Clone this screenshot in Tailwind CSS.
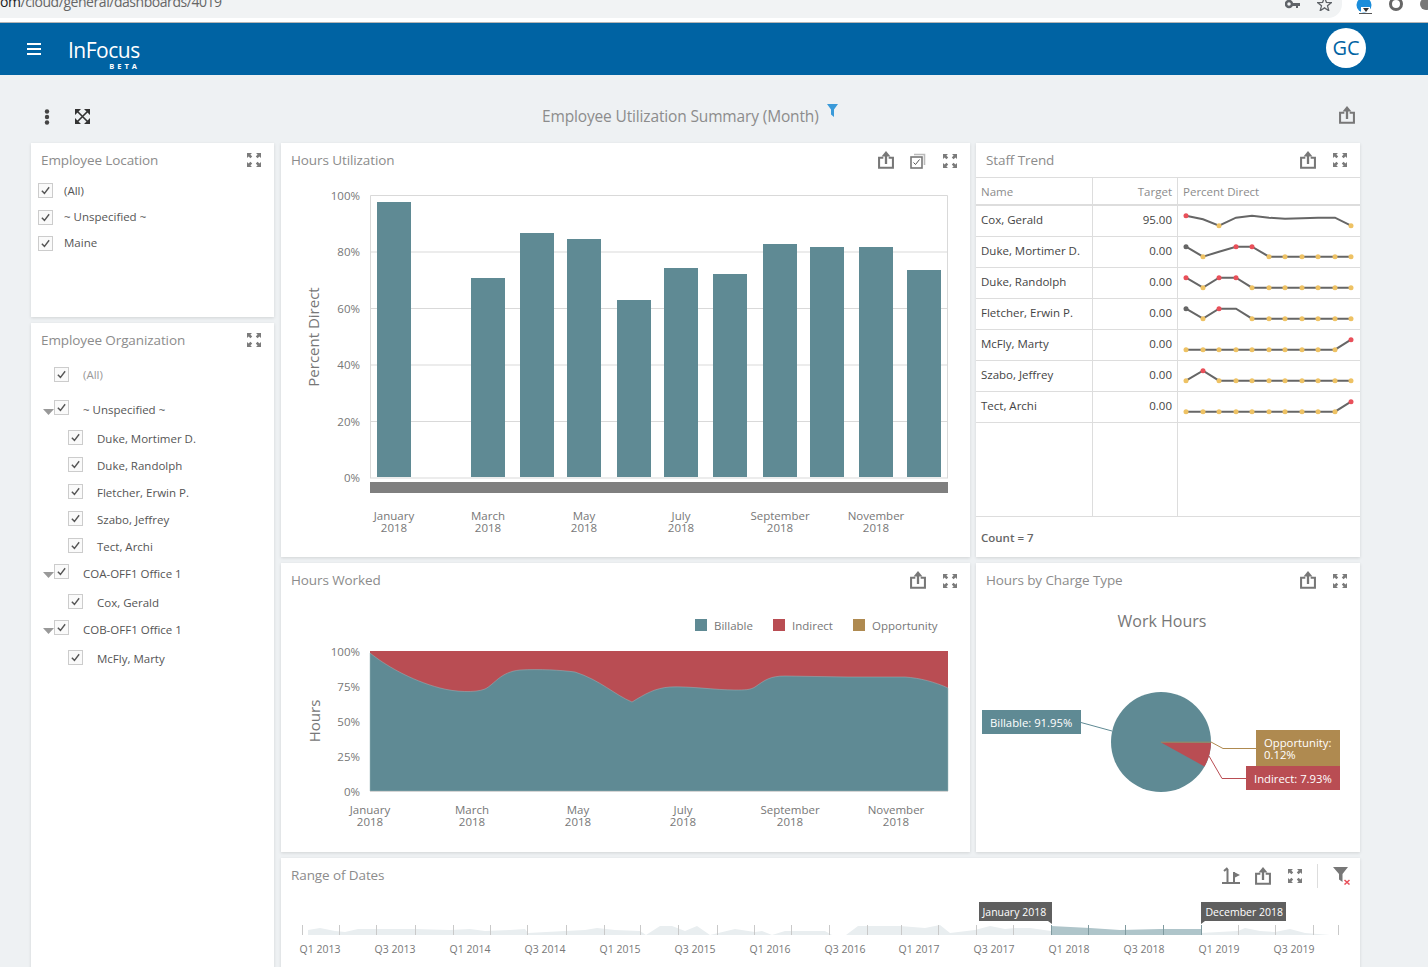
<!DOCTYPE html>
<html><head><meta charset="utf-8">
<script src="https://cdn.jsdelivr.net/npm/@tailwindcss/browser@4"></script>
</head>
<body class="m-0 w-[1428px] h-[967px] overflow-hidden bg-[#eef1f3] font-['Open_Sans','Noto_Sans',sans-serif] text-[12px] text-[#555]">
<svg class="hidden" width="0" height="0">
  <symbol id="ex" viewBox="0 0 16 16"><g fill="#7b7b7b"><path d="M1 1h5L4.4 2.6 6.2 4.4 4.4 6.2 2.6 4.4 1 6zM15 1v5l-1.6-1.6-1.8 1.8-1.8-1.8 1.8-1.8L10 1zM1 15v-5l1.6 1.6 1.8-1.8 1.8 1.8-1.8 1.8L6 15zM15 15h-5l1.6-1.6-1.8-1.8 1.8-1.8 1.8 1.8L15 10z"/></g></symbol>
  <symbol id="sh" viewBox="0 0 18 20"><path d="M6 7.500H1.200v11.300h15.600V7.500H12" fill="none" stroke="#777" stroke-width="2.300"/><path d="M9 14.500V3" stroke="#777" stroke-width="2.600"/><path d="M4 6 9 0l5 6z" fill="#777"/></symbol>
  <symbol id="ck" viewBox="0 0 16 16"><path d="M3.500 8.200 6.700 11.500 12.500 4" fill="none" stroke="#555" stroke-width="1.700"/></symbol>
</svg>

<!-- browser chrome strip -->
<div class="h-[23px] bg-white border-b border-[#b5b5b5] flex overflow-hidden">
  <div class="h-[18px] w-[1342px] shrink-0 bg-[#f1f3f4] rounded-br-[14px] flex justify-between pr-[10px]">
    <div class="text-[14px] leading-[18px] -mt-[7px] tracking-[-0.45px] text-[#666] whitespace-nowrap"><span class="text-[#222]">om</span>/cloud/general/dashboards/4019</div>
    <div class="flex items-start gap-[17px] -mt-[2px] pt-[2px]">
      <svg width="15" height="10" viewBox="0 0 15 10"><circle cx="4" cy="4" r="3" fill="none" stroke="#5f6368" stroke-width="2.500"/><path d="M7 3h8v3h-2v2h-2V6H7z" fill="#5f6368"/></svg>
      <svg width="15" height="14" viewBox="0 0 15 14" class="-mt-[3px]"><path d="M7.500 .5 9.400 5.300l5 .3-3.900 3.200 1.300 4.900-4.300-2.800-4.300 2.800 1.300-4.900L.6 5.600l5-.3z" fill="none" stroke="#5f6368" stroke-width="1.300"/></svg>
    </div>
  </div>
  <div class="flex items-start gap-[16px] pl-[14px] -mt-[3px]">
    <svg width="17" height="18" viewBox="0 0 17 18" class="shrink-0"><circle cx="8" cy="8" r="7.500" fill="#1a8ddb"/><path d="M5 10h9v5H5z" fill="#fff"/><path d="M7 11h6l-3 4z" fill="#333"/><path d="M3 16.500h13" stroke="#555"/></svg>
    <svg width="14" height="16" viewBox="0 0 14 16" class="shrink-0"><circle cx="7" cy="7" r="5.500" fill="none" stroke="#666" stroke-width="3"/></svg>
    <svg width="14" height="16" viewBox="0 0 14 16" class="shrink-0"><circle cx="7" cy="7" r="6" fill="#777"/></svg>
  </div>
</div>

<!-- app header -->
<header class="h-[52px] bg-[#0063a3] flex items-center justify-between pl-[27px] pr-[62px]">
  <div class="flex items-center">
    <svg width="14" height="12" viewBox="0 0 14 12" class="-mt-[1px]"><path d="M0 1h14M0 6h14M0 11h14" stroke="#fff" stroke-width="2"/></svg>
    <div class="ml-[27px] w-[72px] mt-[10px]">
      <div class="text-[21px] leading-[22px] text-white tracking-[-0.5px] whitespace-nowrap">InFocus</div>
      <div class="text-[7.500px] leading-[8px] mt-[1px] font-bold text-white tracking-[3px] text-right">BETA</div>
    </div>
  </div>
  <div class="w-[40px] h-[40px] rounded-full bg-white text-[#0063a3] text-[20px] flex items-center justify-center -mt-[2px]">GC</div>
</header>

<!-- dashboard toolbar -->
<div class="h-[68px] flex items-start pl-[44px] pr-[73px] pt-[32px] justify-between relative">
  <div class="flex items-center gap-[25px]">
    <svg width="6" height="16" viewBox="0 0 6 16" class="mt-[2px]"><circle cx="3" cy="2.500" r="2.200" fill="#444"/><circle cx="3" cy="8" r="2.200" fill="#444"/><circle cx="3" cy="13.500" r="2.200" fill="#444"/></svg>
    <svg width="15" height="15" viewBox="0 0 15 15"><path d="M2 2l11 11M13 2 2 13" stroke="#333" stroke-width="1.600"/><path d="M0 0h6L0 6zM15 0v6l-6-6zM0 15V9l6 6zM15 15H9l6-6z" fill="#333"/></svg>
  </div>
  <div class="absolute left-[542px] top-[30px] flex items-start">
    <div class="text-[15.500px] leading-[22px] text-[#8c8c8c] tracking-[-0.15px] whitespace-nowrap">Employee Utilization Summary (Month)</div>
    <svg width="11" height="13" viewBox="0 0 11 13" class="ml-[8px] mt-[-1px]"><path d="M0 0h11L7 5.500V13L4 10.500V5.500z" fill="#3a9ad9"/></svg>
  </div>
  <svg width="16" height="18" class="mt-[-1px]"><use href="#sh"/></svg>
</div>

<!-- panels -->
<main class="flex pl-[31px]">
  <!-- left column -->
  <div class="w-[243px] mr-[7px] flex flex-col gap-[6px]">
    <section class="h-[174px] bg-white shadow-[0_1px_3px_rgba(0,0,0,.12)]">
      <div class="h-[34px] flex items-center justify-between pl-[10px] pr-[12px]">
        <h2 class="text-[13.500px] font-normal text-[#8c8c8c] tracking-[-0.1px]">Employee Location</h2>
        <svg width="16" height="16"><use href="#ex"/></svg>
      </div>
      <div class="pl-[7px] flex flex-col text-[11.500px]">
        <label class="h-[27px] flex items-center"><span class="w-[15px] h-[15px] border border-[#ccc] bg-[#fafafa] mr-[11px] flex"><svg width="13" height="13"><use href="#ck"/></svg></span>(All)</label>
        <label class="h-[26px] flex items-center"><span class="w-[15px] h-[15px] border border-[#ccc] bg-[#fafafa] mr-[11px] flex"><svg width="13" height="13"><use href="#ck"/></svg></span>~ Unspecified ~</label>
        <label class="h-[26px] flex items-center"><span class="w-[15px] h-[15px] border border-[#ccc] bg-[#fafafa] mr-[11px] flex"><svg width="13" height="13"><use href="#ck"/></svg></span>Maine</label>
      </div>
    </section>
    <section class="h-[650px] bg-white shadow-[0_1px_3px_rgba(0,0,0,.12)]">
      <div class="h-[34px] flex items-center justify-between pl-[10px] pr-[12px]">
        <h2 class="text-[13.500px] font-normal text-[#8c8c8c] tracking-[-0.1px]">Employee Organization</h2>
        <svg width="16" height="16"><use href="#ex"/></svg>
      </div>
      <div class="pt-[4px] flex flex-col text-[11.500px]">
        <div class="h-[27px] flex items-center pl-[23px] text-[#999]"><span class="w-[15px] h-[15px] border border-[#ccc] bg-[#fafafa] mr-[14px] flex"><svg width="13" height="13"><use href="#ck"/></svg></span>(All)</div>
        <div class="h-[36px] mt-[4px] flex items-center pl-[12px]"><svg width="11" height="6" class="mt-[3px]"><path d="M0 0h11L5.500 6z" fill="#999"/></svg><span class="w-[15px] h-[15px] border border-[#ccc] bg-[#fafafa] mr-[14px] flex -mt-[5px]"><svg width="13" height="13"><use href="#ck"/></svg></span>~ Unspecified ~</div>
        <div class="h-[27px] -mt-[3px] flex items-center pl-[37px]"><span class="w-[15px] h-[15px] border border-[#ccc] bg-[#fafafa] mr-[14px] flex -mt-[3px]"><svg width="13" height="13"><use href="#ck"/></svg></span>Duke, Mortimer D.</div>
        <div class="h-[27px] flex items-center pl-[37px]"><span class="w-[15px] h-[15px] border border-[#ccc] bg-[#fafafa] mr-[14px] flex -mt-[3px]"><svg width="13" height="13"><use href="#ck"/></svg></span>Duke, Randolph</div>
        <div class="h-[27px] flex items-center pl-[37px]"><span class="w-[15px] h-[15px] border border-[#ccc] bg-[#fafafa] mr-[14px] flex -mt-[3px]"><svg width="13" height="13"><use href="#ck"/></svg></span>Fletcher, Erwin P.</div>
        <div class="h-[27px] flex items-center pl-[37px]"><span class="w-[15px] h-[15px] border border-[#ccc] bg-[#fafafa] mr-[14px] flex -mt-[3px]"><svg width="13" height="13"><use href="#ck"/></svg></span>Szabo, Jeffrey</div>
        <div class="h-[27px] flex items-center pl-[37px]"><span class="w-[15px] h-[15px] border border-[#ccc] bg-[#fafafa] mr-[14px] flex -mt-[3px]"><svg width="13" height="13"><use href="#ck"/></svg></span>Tect, Archi</div>
        <div class="h-[27px] flex items-center pl-[12px]"><svg width="11" height="6" class="mt-[3px]"><path d="M0 0h11L5.500 6z" fill="#999"/></svg><span class="w-[15px] h-[15px] border border-[#ccc] bg-[#fafafa] mr-[14px] flex -mt-[5px]"><svg width="13" height="13"><use href="#ck"/></svg></span>COA-OFF1 Office 1</div>
        <div class="h-[29px] mt-[1px] -mb-[1px] flex items-center pl-[37px]"><span class="w-[15px] h-[15px] border border-[#ccc] bg-[#fafafa] mr-[14px] flex -mt-[3px]"><svg width="13" height="13"><use href="#ck"/></svg></span>Cox, Gerald</div>
        <div class="h-[27px] flex items-center pl-[12px]"><svg width="11" height="6" class="mt-[3px]"><path d="M0 0h11L5.500 6z" fill="#999"/></svg><span class="w-[15px] h-[15px] border border-[#ccc] bg-[#fafafa] mr-[14px] flex -mt-[5px]"><svg width="13" height="13"><use href="#ck"/></svg></span>COB-OFF1 Office 1</div>
        <div class="h-[29px] mt-[1px] flex items-center pl-[37px]"><span class="w-[15px] h-[15px] border border-[#ccc] bg-[#fafafa] mr-[14px] flex -mt-[3px]"><svg width="13" height="13"><use href="#ck"/></svg></span>McFly, Marty</div>
      </div>
    </section>
  </div>

  <!-- right block -->
  <div class="w-[1079px] flex flex-col gap-[6px]">
    <div class="flex gap-[6px] h-[414px]">
      <!-- Hours Utilization -->
      <section class="w-[689px] bg-white shadow-[0_1px_3px_rgba(0,0,0,.12)] flex flex-col">
        <div class="h-[35px] flex items-center pl-[10px] pr-[12px] gap-[16px]">
          <h2 class="mr-auto text-[13.500px] font-normal text-[#8c8c8c] tracking-[-0.1px]">Hours Utilization</h2>
          <svg width="16" height="18" class="-mt-[1px]"><use href="#sh"/></svg>
          <svg width="16" height="16" viewBox="0 0 16 16"><path d="M4 1.500h10.500V12" fill="none" stroke="#bbb" stroke-width="1.600"/><rect x="1" y="4" width="11" height="11" fill="#fff" stroke="#777" stroke-width="1.600"/><path d="M3.500 9.500l2 2 4-5" fill="none" stroke="#555"/></svg>
          <svg width="16" height="16"><use href="#ex"/></svg>
        </div>
        <svg width="689" height="379" viewBox="281 178 689 379" font-family="Open Sans" font-size="11.500" fill="#777">
          <g stroke="#d9d9d9"><path d="M370.500 195.500H947.500V478M370.500 195.500V478M370 252H948M370 308.500H948M370 365H948M370 421.500H948M370 478H948" fill="none"/></g>
          <g text-anchor="end"><text x="360" y="200">100%</text><text x="360" y="256">80%</text><text x="360" y="313">60%</text><text x="360" y="369">40%</text><text x="360" y="426">20%</text><text x="360" y="482">0%</text></g>
          <text transform="translate(319 337) rotate(-90)" text-anchor="middle" font-size="15">Percent Direct</text>
          <g fill="#5f8a94">
            <rect x="377" y="202" width="34" height="275"/><rect x="471" y="278" width="34" height="199"/><rect x="520" y="233" width="34" height="244"/><rect x="567" y="239" width="34" height="238"/><rect x="617" y="300" width="34" height="177"/><rect x="664" y="268" width="34" height="209"/><rect x="713" y="274" width="34" height="203"/><rect x="763" y="244" width="34" height="233"/><rect x="810" y="247" width="34" height="230"/><rect x="859" y="247" width="34" height="230"/><rect x="907" y="270" width="34" height="207"/>
          </g>
          <rect x="370" y="482" width="578" height="11" fill="#7f7f7f"/>
          <g text-anchor="middle">
            <text x="394" y="520">January</text><text x="394" y="532">2018</text>
            <text x="488" y="520">March</text><text x="488" y="532">2018</text>
            <text x="584" y="520">May</text><text x="584" y="532">2018</text>
            <text x="681" y="520">July</text><text x="681" y="532">2018</text>
            <text x="780" y="520">September</text><text x="780" y="532">2018</text>
            <text x="876" y="520">November</text><text x="876" y="532">2018</text>
          </g>
        </svg>
      </section>
      <!-- Staff Trend -->
      <section class="w-[384px] bg-white shadow-[0_1px_3px_rgba(0,0,0,.12)] flex flex-col">
        <div class="h-[35px] flex items-center pl-[10px] pr-[12px] gap-[16px] border-b border-[#ddd]">
          <h2 class="mr-auto text-[13.500px] font-normal text-[#8c8c8c] tracking-[-0.1px]">Staff Trend</h2>
          <svg width="16" height="18" class="-mt-[1px]"><use href="#sh"/></svg>
          <svg width="16" height="16"><use href="#ex"/></svg>
        </div>
        <div class="flex h-[28px] border-b-2 border-[#ddd] text-[11.500px] text-[#8c8c8c] items-stretch">
          <div class="w-[117px] border-r border-[#ddd] pl-[5px] leading-[28px]">Name</div>
          <div class="w-[85px] border-r border-[#ddd] pr-[5px] text-right leading-[28px]">Target</div>
          <div class="pl-[5px] leading-[28px]">Percent Direct</div>
        </div>
        <div class="flex h-[31px] border-b border-[#ddd] text-[11.500px] text-[#444]">
          <div class="w-[117px] border-r border-[#ddd] pl-[5px] leading-[28px]">Cox, Gerald</div>
          <div class="w-[85px] border-r border-[#ddd] pr-[5px] text-right leading-[28px]">95.00</div>
          <svg width="182" height="30" viewBox="0 1 182 30"><polyline points="8,10.700 25,14.300 41,20.700 58,12.700 74,10.700 91,12.700 107,13.700 124,13.300 140,12.700 157,12.700 173,20.700" fill="none" stroke="#666" stroke-width="2"/><circle cx="8" cy="10.700" r="2.500" fill="#e9505a"/><circle cx="41" cy="20.700" r="2.500" fill="#eec264"/><circle cx="173" cy="20.700" r="2.500" fill="#eec264"/></svg>
        </div>
        <div class="flex h-[31px] border-b border-[#ddd] text-[11.500px] text-[#444]">
          <div class="w-[117px] border-r border-[#ddd] pl-[5px] leading-[28px]">Duke, Mortimer D.</div>
          <div class="w-[85px] border-r border-[#ddd] pr-[5px] text-right leading-[28px]">0.00</div>
          <svg width="182" height="30" viewBox="0 1 182 30"><polyline points="8,10.700 25,20.700 41,15.700 58,10.700 74,10.700 91,20.700 107,20.700 124,20.700 140,20.700 157,20.700 173,20.700" fill="none" stroke="#666" stroke-width="2"/><circle cx="8" cy="10.700" r="2.500" fill="#666"/><circle cx="25" cy="20.700" r="2.500" fill="#eec264"/><circle cx="58" cy="10.700" r="2.500" fill="#e9505a"/><circle cx="74" cy="10.700" r="2.500" fill="#e9505a"/><g fill="#eec264"><circle cx="91" cy="20.700" r="2.500"/><circle cx="107" cy="20.700" r="2.500"/><circle cx="124" cy="20.700" r="2.500"/><circle cx="140" cy="20.700" r="2.500"/><circle cx="157" cy="20.700" r="2.500"/><circle cx="173" cy="20.700" r="2.500"/></g></svg>
        </div>
        <div class="flex h-[31px] border-b border-[#ddd] text-[11.500px] text-[#444]">
          <div class="w-[117px] border-r border-[#ddd] pl-[5px] leading-[28px]">Duke, Randolph</div>
          <div class="w-[85px] border-r border-[#ddd] pr-[5px] text-right leading-[28px]">0.00</div>
          <svg width="182" height="30" viewBox="0 1 182 30"><polyline points="8,10.700 25,20.700 41,10.700 58,10.700 74,20.700 91,20.700 107,20.700 124,20.700 140,20.700 157,20.700 173,20.700" fill="none" stroke="#666" stroke-width="2"/><circle cx="8" cy="10.700" r="2.500" fill="#e9505a"/><circle cx="25" cy="20.700" r="2.500" fill="#eec264"/><circle cx="41" cy="10.700" r="2.500" fill="#e9505a"/><circle cx="58" cy="10.700" r="2.500" fill="#e9505a"/><g fill="#eec264"><circle cx="74" cy="20.700" r="2.500"/><circle cx="91" cy="20.700" r="2.500"/><circle cx="107" cy="20.700" r="2.500"/><circle cx="124" cy="20.700" r="2.500"/><circle cx="140" cy="20.700" r="2.500"/><circle cx="157" cy="20.700" r="2.500"/><circle cx="173" cy="20.700" r="2.500"/></g></svg>
        </div>
        <div class="flex h-[31px] border-b border-[#ddd] text-[11.500px] text-[#444]">
          <div class="w-[117px] border-r border-[#ddd] pl-[5px] leading-[28px]">Fletcher, Erwin P.</div>
          <div class="w-[85px] border-r border-[#ddd] pr-[5px] text-right leading-[28px]">0.00</div>
          <svg width="182" height="30" viewBox="0 1 182 30"><polyline points="8,10.700 25,20.700 41,10.700 58,10.700 74,20.700 91,20.700 107,20.700 124,20.700 140,20.700 157,20.700 173,20.700" fill="none" stroke="#666" stroke-width="2"/><circle cx="8" cy="10.700" r="2.500" fill="#666"/><circle cx="25" cy="20.700" r="2.500" fill="#eec264"/><circle cx="41" cy="10.700" r="2.500" fill="#e9505a"/><g fill="#eec264"><circle cx="74" cy="20.700" r="2.500"/><circle cx="91" cy="20.700" r="2.500"/><circle cx="107" cy="20.700" r="2.500"/><circle cx="124" cy="20.700" r="2.500"/><circle cx="140" cy="20.700" r="2.500"/><circle cx="157" cy="20.700" r="2.500"/><circle cx="173" cy="20.700" r="2.500"/></g></svg>
        </div>
        <div class="flex h-[31px] border-b border-[#ddd] text-[11.500px] text-[#444]">
          <div class="w-[117px] border-r border-[#ddd] pl-[5px] leading-[28px]">McFly, Marty</div>
          <div class="w-[85px] border-r border-[#ddd] pr-[5px] text-right leading-[28px]">0.00</div>
          <svg width="182" height="30" viewBox="0 1 182 30"><polyline points="8,20.700 157,20.700 173,10.700" fill="none" stroke="#666" stroke-width="2"/><g fill="#eec264"><circle cx="8" cy="20.700" r="2.500"/><circle cx="25" cy="20.700" r="2.500"/><circle cx="41" cy="20.700" r="2.500"/><circle cx="58" cy="20.700" r="2.500"/><circle cx="74" cy="20.700" r="2.500"/><circle cx="91" cy="20.700" r="2.500"/><circle cx="107" cy="20.700" r="2.500"/><circle cx="124" cy="20.700" r="2.500"/><circle cx="140" cy="20.700" r="2.500"/><circle cx="157" cy="20.700" r="2.500"/></g><circle cx="173" cy="10.700" r="2.500" fill="#e9505a"/></svg>
        </div>
        <div class="flex h-[31px] border-b border-[#ddd] text-[11.500px] text-[#444]">
          <div class="w-[117px] border-r border-[#ddd] pl-[5px] leading-[28px]">Szabo, Jeffrey</div>
          <div class="w-[85px] border-r border-[#ddd] pr-[5px] text-right leading-[28px]">0.00</div>
          <svg width="182" height="30" viewBox="0 1 182 30"><polyline points="8,20.700 25,10.700 41,20.700 173,20.700" fill="none" stroke="#666" stroke-width="2"/><circle cx="25" cy="10.700" r="2.500" fill="#e9505a"/><g fill="#eec264"><circle cx="8" cy="20.700" r="2.500"/><circle cx="41" cy="20.700" r="2.500"/><circle cx="58" cy="20.700" r="2.500"/><circle cx="74" cy="20.700" r="2.500"/><circle cx="91" cy="20.700" r="2.500"/><circle cx="107" cy="20.700" r="2.500"/><circle cx="124" cy="20.700" r="2.500"/><circle cx="140" cy="20.700" r="2.500"/><circle cx="157" cy="20.700" r="2.500"/><circle cx="173" cy="20.700" r="2.500"/></g></svg>
        </div>
        <div class="flex h-[31px] border-b border-[#ddd] text-[11.500px] text-[#444]">
          <div class="w-[117px] border-r border-[#ddd] pl-[5px] leading-[28px]">Tect, Archi</div>
          <div class="w-[85px] border-r border-[#ddd] pr-[5px] text-right leading-[28px]">0.00</div>
          <svg width="182" height="30" viewBox="0 1 182 30"><polyline points="8,20.700 157,20.700 173,10.700" fill="none" stroke="#666" stroke-width="2"/><g fill="#eec264"><circle cx="8" cy="20.700" r="2.500"/><circle cx="25" cy="20.700" r="2.500"/><circle cx="41" cy="20.700" r="2.500"/><circle cx="58" cy="20.700" r="2.500"/><circle cx="74" cy="20.700" r="2.500"/><circle cx="91" cy="20.700" r="2.500"/><circle cx="107" cy="20.700" r="2.500"/><circle cx="124" cy="20.700" r="2.500"/><circle cx="140" cy="20.700" r="2.500"/><circle cx="157" cy="20.700" r="2.500"/></g><circle cx="173" cy="10.700" r="2.500" fill="#e9505a"/></svg>
        </div>
        <div class="flex flex-1 border-b border-[#ddd]">
          <div class="w-[117px] border-r border-[#ddd]"></div>
          <div class="w-[85px] border-r border-[#ddd]"></div>
        </div>
        <div class="h-[40px] pl-[5px] leading-[41px] text-[11.500px] font-semibold text-[#666]">Count = 7</div>
      </section>
    </div>

    <div class="flex gap-[6px] h-[289px]">
      <!-- Hours Worked -->
      <section class="w-[689px] bg-white shadow-[0_1px_3px_rgba(0,0,0,.12)] flex flex-col">
        <div class="h-[35px] flex items-center pl-[10px] pr-[12px] gap-[16px]">
          <h2 class="mr-auto text-[13.500px] font-normal text-[#8c8c8c] tracking-[-0.1px]">Hours Worked</h2>
          <svg width="16" height="18" class="-mt-[1px]"><use href="#sh"/></svg>
          <svg width="16" height="16"><use href="#ex"/></svg>
        </div>
        <svg width="689" height="254" viewBox="281 598 689 254" font-family="Open Sans" font-size="11.500" fill="#777">
          <rect x="695" y="619" width="12" height="12" fill="#5f8a94"/><text x="714" y="630">Billable</text>
          <rect x="773" y="619" width="12" height="12" fill="#b94d53"/><text x="792" y="630">Indirect</text>
          <rect x="853" y="619" width="12" height="12" fill="#af8a50"/><text x="872" y="630">Opportunity</text>
          <g text-anchor="end"><text x="360" y="656">100%</text><text x="360" y="691">75%</text><text x="360" y="726">50%</text><text x="360" y="761">25%</text><text x="360" y="796">0%</text></g>
          <text transform="translate(320 721) rotate(-90)" text-anchor="middle" font-size="15">Hours</text>
          <rect x="370" y="651" width="578" height="140" fill="#b94d53"/>
          <path d="M370 653C385 665 410 680 440 688C455 692 475 693 485 689C495 684 500 672 520 670C540 669 560 670 575 672C600 680 615 695 632 702C645 694 655 688 670 687C690 686 715 690 735 690C745 690 750 690 755 687C765 680 770 676 785 676L848 677L905 677C920 678 935 682 948 688V791H370Z" fill="#5f8a94" stroke="#9ab5bb" stroke-width=".5"/>
          <path d="M370 791.500H948" stroke="#d5d5d5"/>
          <g text-anchor="middle">
            <text x="370" y="814">January</text><text x="370" y="826">2018</text>
            <text x="472" y="814">March</text><text x="472" y="826">2018</text>
            <text x="578" y="814">May</text><text x="578" y="826">2018</text>
            <text x="683" y="814">July</text><text x="683" y="826">2018</text>
            <text x="790" y="814">September</text><text x="790" y="826">2018</text>
            <text x="896" y="814">November</text><text x="896" y="826">2018</text>
          </g>
        </svg>
      </section>
      <!-- Hours by Charge Type -->
      <section class="w-[384px] bg-white shadow-[0_1px_3px_rgba(0,0,0,.12)] flex flex-col">
        <div class="h-[35px] flex items-center pl-[10px] pr-[12px] gap-[16px]">
          <h2 class="mr-auto text-[13.500px] font-normal text-[#8c8c8c] tracking-[-0.1px]">Hours by Charge Type</h2>
          <svg width="16" height="18" class="-mt-[1px]"><use href="#sh"/></svg>
          <svg width="16" height="16"><use href="#ex"/></svg>
        </div>
        <svg width="384" height="254" viewBox="976 598 384 254" font-family="Open Sans" font-size="11.300">
          <text x="1162" y="627" text-anchor="middle" font-size="16" fill="#777">Work Hours</text>
          <circle cx="1161" cy="742" r="50" fill="#5f8a94"/>
          <path d="M1161 742.500 1211 743A50 50 0 0 1 1204.500 766.500Z" fill="#b94d53"/>
          <path d="M1161 742.200H1211" stroke="#af8a50" stroke-width=".8"/>
          <path d="M1081 722.500 1112 731" stroke="#5f8a94" fill="none"/>
          <path d="M1211 742 1223 748.500H1256" stroke="#af8a50" fill="none"/>
          <path d="M1209 756 1222 778.500H1246" stroke="#b94d53" fill="none"/>
          <rect x="982" y="710" width="99" height="24" fill="#5f8a94"/><text x="990" y="727" fill="#fff">Billable: 91.95%</text>
          <rect x="1256" y="730" width="84" height="36" fill="#af8a50"/><text x="1264" y="747" fill="#fff">Opportunity:</text><text x="1264" y="759" fill="#fff">0.12%</text>
          <rect x="1246" y="766" width="94" height="24" fill="#b94d53"/><text x="1254" y="783" fill="#fff">Indirect: 7.93%</text>
        </svg>
      </section>
    </div>

    <!-- Range of Dates -->
    <section class="h-[130px] bg-white shadow-[0_1px_3px_rgba(0,0,0,.12)] flex flex-col">
      <div class="h-[35px] flex items-center pl-[10px] pr-[9px]">
        <h2 class="mr-auto text-[13.500px] font-normal text-[#8c8c8c] tracking-[-0.1px]">Range of Dates</h2>
        <svg width="18" height="17" viewBox="0 0 18 17"><path d="M0 16h18" stroke="#777" stroke-width="2"/><path d="M5.500 16V2M2 4l3.500-3" stroke="#777" stroke-width="2" fill="none"/><path d="M12 16V5" stroke="#777" stroke-width="2"/><path d="M12 5l6 3-6 3z" fill="#777"/></svg>
        <svg width="16" height="18" class="ml-[15px]"><use href="#sh"/></svg>
        <svg width="16" height="16" class="ml-[16px]"><use href="#ex"/></svg>
        <div class="w-px h-[24px] bg-[#ddd] ml-[14px]"></div>
        <svg width="18" height="18" viewBox="0 0 18 18" class="ml-[15px]"><path d="M0 0h15L9.500 7v8L6 12.500V7z" fill="#777"/><path d="M11.500 13l5 4.500M16.500 13l-5 4.500" stroke="#e9505a" stroke-width="1.500"/></svg>
      </div>
      <svg width="1079" height="74" viewBox="281 893 1079 74" font-family="Open Sans" font-size="10.500" fill="#777">
        <path d="M308 935V930L320 928L335 931L345 932L358 929L415 929L450 930L470 929L485 931L510 930L525 929L528 933L565 931L585 930L597 928L615 930L640 931L646 935L660 926L672 926L685 931L697 926L710 935L735 929L755 932L762 931L772 935L785 931L825 931L832 935L846 935L858 926L900 926L925 928L940 925L950 933L975 930L990 926L1005 929L1015 928L1030 928L1051 931L1100 932L1120 933L1160 932L1200 933L1238 931L1245 928L1260 931L1275 932L1290 929L1305 933L1330 935Z" fill="#e9eef0"/>
        <path d="M1051 926L1090 928L1120 930L1160 929L1201 929V935H1051Z" fill="#afc5ca"/>
        <g stroke="#c9c9c9"><path d="M302.500 925V935M339.500 925V935M376.500 925V935M415.500 925V935M453.500 925V935M490.500 925V935M527.500 925V935M566.500 925V935M604.500 925V935M640.500 925V935M678.500 925V935M717.500 925V935M754.500 925V935M791.500 925V935M829.500 925V935M867.500 925V935M901.500 925V935M938.500 925V935M976.500 925V935M1013.500 925V935M1238.500 925V935M1275.500 925V935M1313.500 925V935M1338.500 925V935"/></g>
        <path d="M1051.500 925V935M1088.500 925V935M1125.500 925V935M1163.500 925V935M1201.500 925V935" stroke="#7f9a9f"/>
        <g text-anchor="middle">
          <text x="320" y="953">Q1 2013</text><text x="395" y="953">Q3 2013</text><text x="470" y="953">Q1 2014</text><text x="545" y="953">Q3 2014</text><text x="620" y="953">Q1 2015</text><text x="695" y="953">Q3 2015</text><text x="770" y="953">Q1 2016</text><text x="845" y="953">Q3 2016</text><text x="919" y="953">Q1 2017</text><text x="994" y="953">Q3 2017</text><text x="1069" y="953">Q1 2018</text><text x="1144" y="953">Q3 2018</text><text x="1219" y="953">Q1 2019</text><text x="1294" y="953">Q3 2019</text>
        </g>
        <path d="M979 902H1052V924L1048 921H979Z" fill="#5f5f5f"/><text x="982.500" y="916" fill="#fff">January 2018</text>
        <path d="M1201 902H1286V921H1205L1201 924Z" fill="#5f5f5f"/><text x="1205.500" y="916" fill="#fff">December 2018</text>
      </svg>
    </section>
  </div>
</main>
</body></html>
